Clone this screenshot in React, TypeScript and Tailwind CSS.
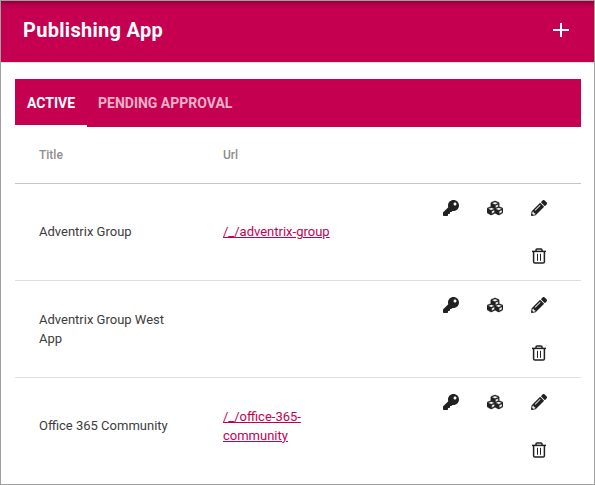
import React from "react";
import { FaCubes, FaKey, FaPencilAlt } from "react-icons/fa";

type Publication = { title: string; url?: string };

const publications: Publication[] = [
  { title: "Adventrix Group", url: "/_/adventrix-group" },
  { title: "Adventrix Group West App" },
  { title: "Office 365 Community", url: "/_/office-365-community" },
];

function TrashIcon() {
  return (
    <svg width="16" height="16" viewBox="0 0 16 16" fill="none" stroke="currentColor">
      <path d="M1 3.4h14" strokeWidth="1.5" />
      <path d="M5 3V1.9q0-1 1-1h4q1 0 1 1V3" strokeWidth="1.5" />
      <path d="M2.6 3.5v10.2c0 .9.4 1.4 1.3 1.4h8.2c.9 0 1.3-.5 1.3-1.4V3.5" strokeWidth="1.5" />
      <path d="M6.5 5.8v7M9.5 5.8v7" strokeWidth="1" />
    </svg>
  );
}

function IconButton({ label, children }: { label: string; children: React.ReactNode }) {
  return (
    <button aria-label={label} className="flex h-12 w-11 items-center justify-center text-[#212121]">
      {children}
    </button>
  );
}

function Row({ item, last }: { item: Publication; last: boolean }) {
  return (
    <div className={`flex items-center text-[13px] leading-[19px] text-[#3c3c3c] ${last ? "h-24" : "h-[97px] border-b border-[#dfdfdf]"}`}>
      <div className="w-[184px] pl-6 pr-6 pb-px">{item.title}</div>
      <div className="w-[150px] pl-6 pr-3 pb-px">
        {item.url && <a className="text-[#c50051] underline">{item.url}</a>}
      </div>
      <div className="ml-auto mr-5 flex h-24 w-[132px] flex-wrap justify-end">
        <IconButton label="Permissions"><FaKey size={16} /></IconButton>
        <IconButton label="Blocks"><FaCubes size={16} stroke="currentColor" strokeWidth={10} /></IconButton>
        <IconButton label="Edit"><FaPencilAlt size={16} /></IconButton>
        <IconButton label="Delete"><TrashIcon /></IconButton>
      </div>
    </div>
  );
}

export default function App() {
  return (
    <div className="flex h-[485px] w-[595px] flex-col overflow-hidden border border-[#a0a0a0] bg-white font-['Roboto',sans-serif]">
      <header className="flex h-[62px] shrink-0 items-center justify-between border-b border-[#e0e0e0] bg-[#c50051] pl-[22px] pr-[25px] pb-[3px] text-white shadow-[inset_0_5px_5px_-3px_rgba(0,0,0,0.35)]">
        <h1 className="text-[20px] font-bold tracking-[0.3px]">Publishing App</h1>
        <svg width="16" height="16" viewBox="0 0 16 16" stroke="white" strokeWidth="2">
          <path d="M0 8h16M8 1v14" />
        </svg>
      </header>
      <main className="ml-[14px] mr-[13px] mt-4">
        <nav className="flex h-12 bg-[#c50051] text-[14px] font-bold">
          <button className="w-[72px] border-b-2 border-white pt-0.5 text-white">ACTIVE</button>
          <button className="pl-[11px] text-white/70">PENDING APPROVAL</button>
        </nav>
        <div className="flex h-[57px] items-center border-b border-[#c4c4c4] text-[12px] font-medium text-[#8e8e8e]">
          <div className="w-[184px] pl-6">Title</div>
          <div className="pl-6">Url</div>
        </div>
        {publications.map((item, i) => (
          <Row key={item.title} item={item} last={i === publications.length - 1} />
        ))}
      </main>
    </div>
  );
}
